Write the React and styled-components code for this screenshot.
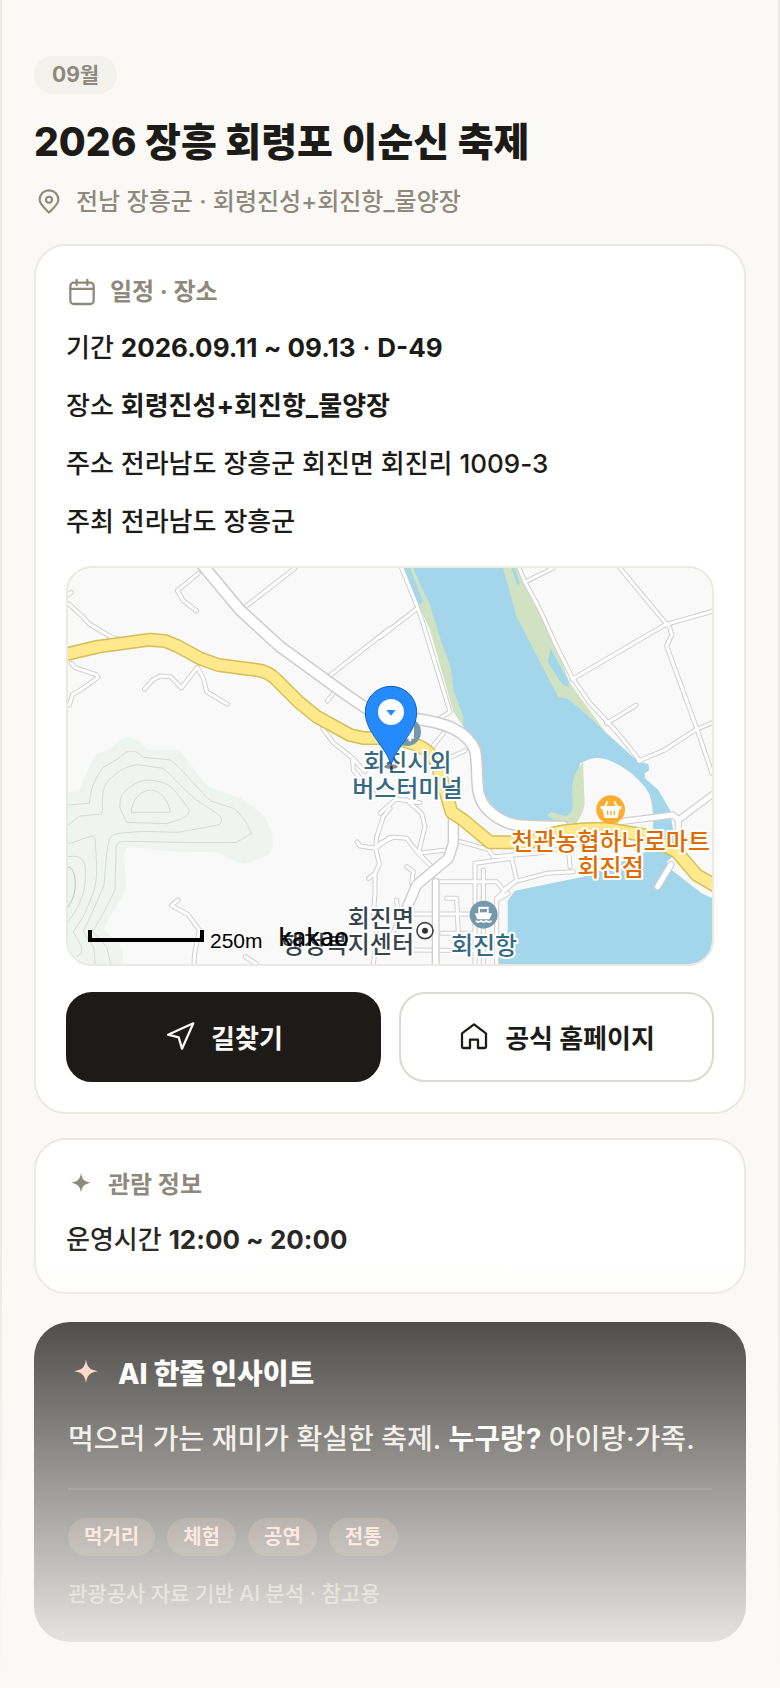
import React from "react";
import styled, { createGlobalStyle } from "styled-components";

const contours = [
  "M24 735 L88 730 C92 690 100 660 130 622 L180 592 C200 568 225 566 250 592 L330 600 C360 620 380 650 450 722 L520 745 C545 760 560 790 575 820 L530 847 C400 850 300 845 200 844 C175 844 165 850 168 880 L165 990 L130 1060 L98 1115 L140 1160 L152 1212",
  "M24 795 L60 768 L125 762 C132 735 120 700 140 668 C165 640 190 620 230 614 L310 625 C340 650 370 690 410 720 L470 760 C490 775 490 790 470 796 L355 817 L245 814 C200 820 160 815 148 835 L140 880 L132 975 L100 1050 L70 1115 L102 1165 L105 1212",
  "M24 852 L95 828 C110 828 104 850 108 880 C112 950 110 970 95 1010 L70 1070 L40 1115 L64 1160 L64 1180 L50 1190",
  "M180 745 C178 715 185 700 205 685 C235 660 262 656 300 665 C335 672 350 700 385 745 C395 765 370 778 318 791 L200 787 Z",
  "M214 757 C216 720 240 692 272 690 C300 690 325 720 331 757 Z",
  "M24 890 C60 885 75 895 76 930 C80 990 60 1040 24 1085",
];

const lanes = [
  "M24 105 L34 97 M24 130 L66 168 L88 192 L155 232 L180 238",
  "M415 40 L352 92 L370 122 L410 153",
  "M705 24 L550 145",
  "M990 205 L808 348 M820 400 L802 423",
  "M34 310 L44 322 L108 344 L114 352 L68 386 L38 403 L28 435",
  "M253 388 L278 360 L300 348 L332 350 L364 384 L412 322 L430 355 L440 395 L503 433",
  "M788 505 L820 548 L880 596 L915 635 M878 600 L880 630 L905 660 L950 710",
  "M990 745 L970 770 L950 830 L947 865 L958 912 L945 940 L945 1000 L940 1060 L950 1130 L940 1212 M947 865 L900 858 L892 846 M947 865 L990 832 M945 940 L926 955",
  "M355 1020 L334 1036 L384 1064 L418 1110 L404 1180 L402 1212 M556 1190 L590 1212",
  "M1020 12 L1068 130 M960 232 L1068 148 M1068 130 L1086 180 L1170 455 L1130 482",
  "M1372 12 L1395 66 L1440 150 L1490 260 L1535 350 L1590 430 L1670 515 L1740 603",
  "M1395 66 L1480 24 M1680 24 L1830 205 L1835 225 L1820 258 L1912 510 L1956 640",
  "M1536 358 L1816 194 L1956 154 M1640 490 L1728 436 M1736 603 L1810 572 L1906 510 L1956 488",
  "M1105 575 L1150 520 M1165 595 L1215 572",
  "M960 760 L1008 717 L1080 728 M1040 720 L1085 760 L1095 800 L1075 880 L1120 925 M960 850 L1000 832 L1040 835 L1075 880 L1160 870",
  "M1040 920 L1060 935 L1055 970 M1010 1020 L1015 1080 L990 1140",
  "M1200 845 L1285 868 L1300 890 L1430 880 L1540 860 M1355 895 L1370 960 L1310 1015 M1525 865 L1530 920",
  "M1245 1212 L1245 910 L1355 895 M1130 965 L1310 965 L1330 990 L1365 965 L1460 940 L1540 935",
  "M1270 930 L1270 1212 M1060 1062 L1245 1062 M1160 1015 L1190 1015 L1195 1120 M1145 1120 L1245 1120 M1060 1170 L1245 1172",
  "M1310 1212 L1310 1020 L1345 1000",
];

const lineProps = { fill: "none", strokeLinejoin: "round", strokeLinecap: "round" };
const trunk = "M425 12 L540 150 L660 260 L850 398 L930 452 L1075 478 C1150 488 1220 510 1245 570 C1260 640 1235 710 1290 755 C1350 810 1400 795 1510 800";
const branch = "M1180 760 L1180 850 L1165 895 L1070 975 L1040 1045";
const quay = "M1680 785 L1840 765 L1855 780 L1956 705 M1855 780 L1855 860 M1833 914 L1793 980";
const highway =
  "M0 287 L115 260 L270 239 L315 243 L350 257 L420 295 L475 315 L590 330 Q625 334 650 360 L715 425 L770 470 L870 525 L910 534 L1010 534 L1070 555 Q1110 570 1130 610 L1155 690 L1175 757 L1210 780 L1290 847 L1410 847 L1480 820 Q1540 805 1640 807 L1750 825 L1850 875 L1910 945 L1970 980";

const LocalMap = () => (
  <MapSvg viewBox="24 24 1932 1188" preserveAspectRatio="xMidYMid slice" role="img" aria-label="회진항 지도">
    <rect x="0" y="0" width="2000" height="1240" fill="#f9f9f9" />
    <path
      d="M0 697 L55 694 L105 585 L155 562 C185 525 220 520 265 569 L350 571 C390 590 400 640 450 682 L545 716 L610 765 C640 810 650 870 625 885 L555 912 C520 905 500 890 470 877 L350 875 L240 865 C200 862 192 860 192 885 L198 970 C190 1030 140 1070 132 1110 L180 1150 Q192 1180 190 1240 L0 1240 Z"
      fill="#eff4f1"
    />
    <g fill="none" stroke="#d3dad5" strokeWidth="3">
      {contours.map((d) => (
        <path key={d} d={d} />
      ))}
      <path d="M24 920 Q45 925 46 970 Q46 1010 24 1042" stroke="#bcc4be" />
    </g>
    {/* river banks, then the water over them */}
    <path
      d="M1046 12 L1080 145 L1110 210 L1170 420 L1180 455 L1210 500 L1260 520 L1100 60 Z M1320 12 L1380 24 L1400 80 L1480 240 L1530 370 L1650 535 L1600 550 L1480 430 L1350 160 Z"
      fill="#d1e2c3"
    />
    <path
      d="M1050 12 L1108 130 L1145 250 L1172 320 L1180 390 L1210 470 L1210 500 C1265 560 1250 640 1270 690 C1300 760 1340 782 1400 782 L1490 782 L1540 770 L1560 610 C1620 580 1690 610 1740 665 C1780 700 1775 740 1780 765 L1778 860 L1750 880 L1570 950 L1365 992 L1343 1022 L1343 1180 L1310 1180 L1310 1240 L1990 1240 L1990 1030 L1925 1000 L1835 930 L1820 905 L1850 880 L1830 750 L1795 690 L1755 655 L1754 640 L1768 630 L1765 612 L1735 605 L1640 520 C1600 485 1570 450 1520 415 L1495 412 L1450 325 L1370 170 L1326 12 Z"
      fill="#a3d6eb"
    />
    <path d="M1028 12 L1053 24 L1090 122 L1080 137 L1068 125 Z M1362 18 L1380 74 L1370 72 L1355 24 Z M1472 264 L1528 368 L1525 381 L1508 374 L1463 305 Z" fill="#a3d6eb" />
    <path d="M1050 24 L1060 24 L1110 145 L1096 140 Z" fill="#d1e2c3" />
    <path d="M1570 606 C1545 640 1535 650 1537 710 C1542 750 1535 762 1515 768 L1475 757 L1462 764 L1490 785 L1550 790 L1575 750 Z" fill="#d1e2c3" />
    <path d="M1570 606 C1630 570 1700 620 1750 690 L1776 740 L1778 785 L1550 790 C1575 750 1578 730 1572 690 Z" fill="#f9f9f9" />
    <g {...lineProps}>
      {lanes.map((d) => (
        <path key={d} d={d} stroke="#cfcfcf" strokeWidth="15" />
      ))}
      {lanes.map((d) => (
        <path key={d} d={d} stroke="#ffffff" strokeWidth="9" />
      ))}
      <path d={quay} stroke="#cfcfcf" strokeWidth="22" />
      <path d={quay} stroke="#ffffff" strokeWidth="15" />
      <path d="M1127 1230 L1127 965" stroke="#cfcfcf" strokeWidth="24" />
      <path d="M1127 1230 L1127 965" stroke="#ffffff" strokeWidth="16" />
      <path d={trunk} stroke="#cccccc" strokeWidth="38" />
      <path d={branch} stroke="#cccccc" strokeWidth="34" />
      <path d={trunk} stroke="#ffffff" strokeWidth="29" />
      <path d={branch} stroke="#ffffff" strokeWidth="26" />
      <path d={highway} stroke="#d3bf57" strokeWidth="42" />
      <path d={highway} stroke="#ffe98c" strokeWidth="33" />
    </g>
    {/* bus terminal badge */}
    <circle cx="1041" cy="516" r="42" fill="#7399ab" />
    <path d="M1020 494 h42 v42 h-8 v8 h-8 v-8 h-26 Z" fill="#ffffff" />
    <path d="M1026 502 h26 v14 h-26 Z" fill="#7399ab" />
    {/* market badge */}
    <circle cx="1652" cy="749" r="43" fill="#ffac33" />
    <path d="M1626 742 h54 l-7 32 h-40 Z M1622 738 h62 v9 h-62 Z" fill="#ffffff" />
    <path d="M1634 742 L1643 724 M1672 742 L1663 724" stroke="#ffffff" strokeWidth="6" />
    <path d="M1643 752 v13 M1653 752 v13 M1663 752 v13" stroke="#ffac33" strokeWidth="4" />
    {/* harbour badge */}
    <circle cx="1271" cy="1064" r="42" fill="#7399ab" />
    <path d="M1255 1040 h31 v20 h10 l-8 18 h-36 l-8 -18 h11 Z" fill="#ffffff" />
    <path d="M1260 1047 h21 v10 h-21 Z" fill="#7399ab" />
    <path d="M1247 1083 q8 5 16 0 q8 5 16 0 q8 5 16 0" fill="none" stroke="#ffffff" strokeWidth="5" />
    <circle cx="1095" cy="1112" r="24" fill="#ffffff" stroke="#444444" strokeWidth="5" />
    <circle cx="1095" cy="1112" r="9" fill="#333333" />
    <MapLabel x="1042" y="632" fill="#366982">회진시외</MapLabel>
    <MapLabel x="1042" y="711" fill="#366982">버스터미널</MapLabel>
    <MapLabel x="1652" y="869" fill="#e06c00">천관농협하나로마트</MapLabel>
    <MapLabel x="1652" y="949" fill="#e06c00">회진점</MapLabel>
    <MapLabel x="1272" y="1182" fill="#366982">회진항</MapLabel>
    <MapLabel x="1062" y="1100" fill="#37444c" $end>회진면</MapLabel>
    <MapLabel x="1062" y="1180" fill="#37444c" $end>행정복지센터</MapLabel>
    <path d="M90 1110 V1140 H426 V1110" fill="none" stroke="#000000" strokeWidth="12" />
    <ScaleText x="450" y="1163">250m</ScaleText>
    <BrandText x="655" y="1158">kakao</BrandText>
    <ellipse cx="993" cy="620" rx="20" ry="7" fill="#000000" opacity="0.45" />
    <path
      d="M993 616 C980 560 916 520 916 456 A77 77 0 0 1 1070 456 C1070 520 1006 560 993 616 Z"
      fill="#258bfd"
      stroke="#155cc0"
      strokeWidth="3"
    />
    <circle cx="993" cy="456" r="39" fill="#ffffff" />
    <path d="M979 450 H1007 L993 467 Z" fill="#258bfd" />
  </MapSvg>
);

const PinIcon = () => (
  <Icon $size={30} viewBox="0 0 24 24">
    <path d="M12 20.5 C9 17 4.5 14 4.5 10.2 a7.5 7.5 0 0 1 15 0 c0 3.8 -4.5 6.8 -7.5 10.3 Z" />
    <circle cx="12" cy="10.2" r="2.4" />
  </Icon>
);

const CalendarIcon = () => (
  <Icon $size={32} viewBox="0 0 24 24">
    <rect x="3.25" y="5" width="17.5" height="16" rx="2.5" />
    <path d="M3.25 9.6 H20.75 M8 3 V6.8 M16 3 V6.8" />
  </Icon>
);

const RouteIcon = () => (
  <Icon $size={32} viewBox="0 0 24 24">
    <path d="M3 11 L22 2.5 L13.5 21.5 L11 13 Z" />
  </Icon>
);

const HomeIcon = () => (
  <Icon $size={32} viewBox="0 0 24 24">
    <path d="M3 10 L12 3.3 L21 10 V20 A1 1 0 0 1 20 21 H15 V14.8 H9 V21 H4 A1 1 0 0 1 3 20 Z" />
  </Icon>
);

const Sparkle = ({ size }) => (
  <SolidIcon $size={size} viewBox="0 0 24 24">
    <path d="M12 2.4 C12.9 7.6 14.3 9.2 20 10.2 C14.3 11.2 12.9 12.8 12 18 C11.1 12.8 9.7 11.2 4 10.2 C9.7 9.2 11.1 7.6 12 2.4 Z" />
  </SolidIcon>
);

const tags = ["먹거리", "체험", "공연", "전통"];

const App = () => {
  return (
    <>
      <GlobalStyle />
      <Page>
        <Month>09월</Month>
        <Title>2026 장흥 회령포 이순신 축제</Title>
        <Place>
          <PinIcon />
          전남 장흥군 · 회령진성+회진항_물양장
        </Place>
        <Card>
          <CardTitle>
            <CalendarIcon />
            일정 · 장소
          </CardTitle>
          <Info>
            <p>
              기간 <b>2026.09.11 ~ 09.13</b> · <b>D-49</b>
            </p>
            <p>
              장소 <b>회령진성+회진항_물양장</b>
            </p>
            <p>주소 전라남도 장흥군 회진면 회진리 1009-3</p>
            <p>주최 전라남도 장흥군</p>
          </Info>
          <MapBox>
            <LocalMap />
          </MapBox>
          <Actions>
            <ActionButton type="button" $dark>
              <RouteIcon />
              길찾기
            </ActionButton>
            <ActionButton type="button">
              <HomeIcon />
              공식 홈페이지
            </ActionButton>
          </Actions>
        </Card>
        <Card>
          <CardTitle>
            <Sparkle size={30} />
            관람 정보
          </CardTitle>
          <Info>
            <p>
              운영시간 <b>12:00 ~ 20:00</b>
            </p>
          </Info>
        </Card>
        <Insight>
          <InsightTitle>
            <Sparkle size={36} />
            AI 한줄 인사이트
          </InsightTitle>
          <Summary>
            먹으러 가는 재미가 확실한 축제. <b>누구랑?</b> 아이랑·가족.
          </Summary>
          <Tags>
            {tags.map((tag) => (
              <li key={tag}>{tag}</li>
            ))}
          </Tags>
          <Source>관광공사 자료 기반 AI 분석 · 참고용</Source>
        </Insight>
        <Fade />
      </Page>
    </>
  );
};

export default App;

const GlobalStyle = createGlobalStyle`
  * {
    box-sizing: border-box;
    margin: 0;
    padding: 0;
  }
  body {
    background: #faf9f5;
    color: #1d1b17;
    font-family: Inter, "Noto Sans CJK KR", sans-serif;
    font-weight: 500;
  }
  b {
    font-weight: 700;
  }
`;

const Page = styled.main`
  position: relative;
  min-height: 100vh;
  padding: 56px 32px 44px;
  border: solid #ebe9e1;
  border-width: 0 2px;
`;

const Month = styled.span`
  display: inline-block;
  padding: 0 18px;
  border-radius: 19px;
  background: #f3f2ed;
  color: #8e897c;
  font-size: 21px;
  font-weight: 700;
  line-height: 38px;
  vertical-align: top;
`;

const Title = styled.h1`
  margin-top: 20px;
  font-size: 39px;
  font-weight: 800;
  line-height: 56px;
`;

const Place = styled.p`
  display: flex;
  align-items: center;
  gap: 12px;
  margin-top: 16px;
  color: #8e897c;
  font-size: 24px;
  line-height: 32px;
`;

const Card = styled.section`
  margin-top: 24px;
  padding: 30px;
  border: 2px solid #ebe9e1;
  border-radius: 32px;
  background: #ffffff;

  ${Place} + & {
    margin-top: 26px;
  }
`;

const CardTitle = styled.h2`
  display: flex;
  align-items: center;
  gap: 12px;
  margin-bottom: 18px;
  color: #8e897c;
  font-size: 24px;
  font-weight: 700;
  line-height: 30px;
`;

const Info = styled.div`
  display: grid;
  gap: 14px;
  font-size: 26px;
  line-height: 44px;
`;

const MapBox = styled.div`
  height: 400px;
  margin-top: 22px;
  overflow: hidden;
  border: 2px solid #ebe9e1;
  border-radius: 26px;
`;

const MapSvg = styled.svg`
  display: block;
  width: 100%;
  height: 100%;
`;

const MapLabel = styled.text`
  font-family: "Noto Sans CJK KR", sans-serif;
  font-size: 72px;
  font-weight: 500;
  text-anchor: ${({ $end }) => ($end ? "end" : "middle")};
  paint-order: stroke;
  stroke: #ffffff;
  stroke-width: 12px;
  stroke-linejoin: round;
`;

const ScaleText = styled.text`
  font-family: "Liberation Sans", sans-serif;
  font-size: 63px;
  font-weight: 400;
`;

const BrandText = styled.text`
  font-family: "Noto Sans", sans-serif;
  font-size: 74px;
  font-weight: 500;
`;

const Actions = styled.div`
  display: grid;
  grid-template-columns: 1fr 1fr;
  gap: 18px;
  margin-top: 26px;
`;

const ActionButton = styled.button`
  display: flex;
  align-items: center;
  justify-content: center;
  gap: 15px;
  height: 90px;
  padding-bottom: 2px;
  border: 2px solid ${({ $dark }) => ($dark ? "#1d1b17" : "#dcd9cf")};
  border-radius: 26px;
  background: ${({ $dark }) => ($dark ? "#1d1b17" : "#ffffff")};
  color: ${({ $dark }) => ($dark ? "#faf9f5" : "#1d1b17")};
  font: inherit;
  font-size: 26px;
  font-weight: 700;
  cursor: pointer;
`;

const Icon = styled.svg`
  flex: none;
  width: ${({ $size }) => $size}px;
  height: ${({ $size }) => $size}px;
  fill: none;
  stroke: currentColor;
  stroke-width: 1.7;
  stroke-linecap: round;
  stroke-linejoin: round;
`;

const SolidIcon = styled(Icon)`
  fill: currentColor;
  stroke: none;
`;

const Insight = styled.section`
  margin-top: 28px;
  padding: 34px 34px 32px;
  border-radius: 36px;
  background: #1d1b17;
  color: #ebe9e1;
`;

const InsightTitle = styled.h2`
  display: flex;
  align-items: center;
  gap: 14px;
  color: #ffffff;
  font-size: 28px;
  font-weight: 800;
  line-height: 36px;

  svg {
    color: #ffc9b8;
  }
`;

const Summary = styled.p`
  margin-top: 24px;
  padding-bottom: 26px;
  border-bottom: 2px solid #393733;
  font-size: 28px;
  line-height: 46px;

  b {
    color: #ffffff;
  }
`;

const Tags = styled.ul`
  display: flex;
  gap: 12px;
  margin-top: 28px;
  list-style: none;

  li {
    padding: 0 16px;
    border-radius: 19px;
    background: #4a3731;
    color: #ffc9b8;
    font-size: 20px;
    font-weight: 700;
    line-height: 38px;
  }
`;

const Source = styled.p`
  margin-top: 22px;
  color: #9a958a;
  font-size: 21px;
  line-height: 32px;
`;

const Fade = styled.div`
  position: absolute;
  right: -2px;
  bottom: 0;
  left: -2px;
  height: 476px;
  background: linear-gradient(rgba(250, 249, 245, 0), #faf9f5);
  pointer-events: none;
`;
